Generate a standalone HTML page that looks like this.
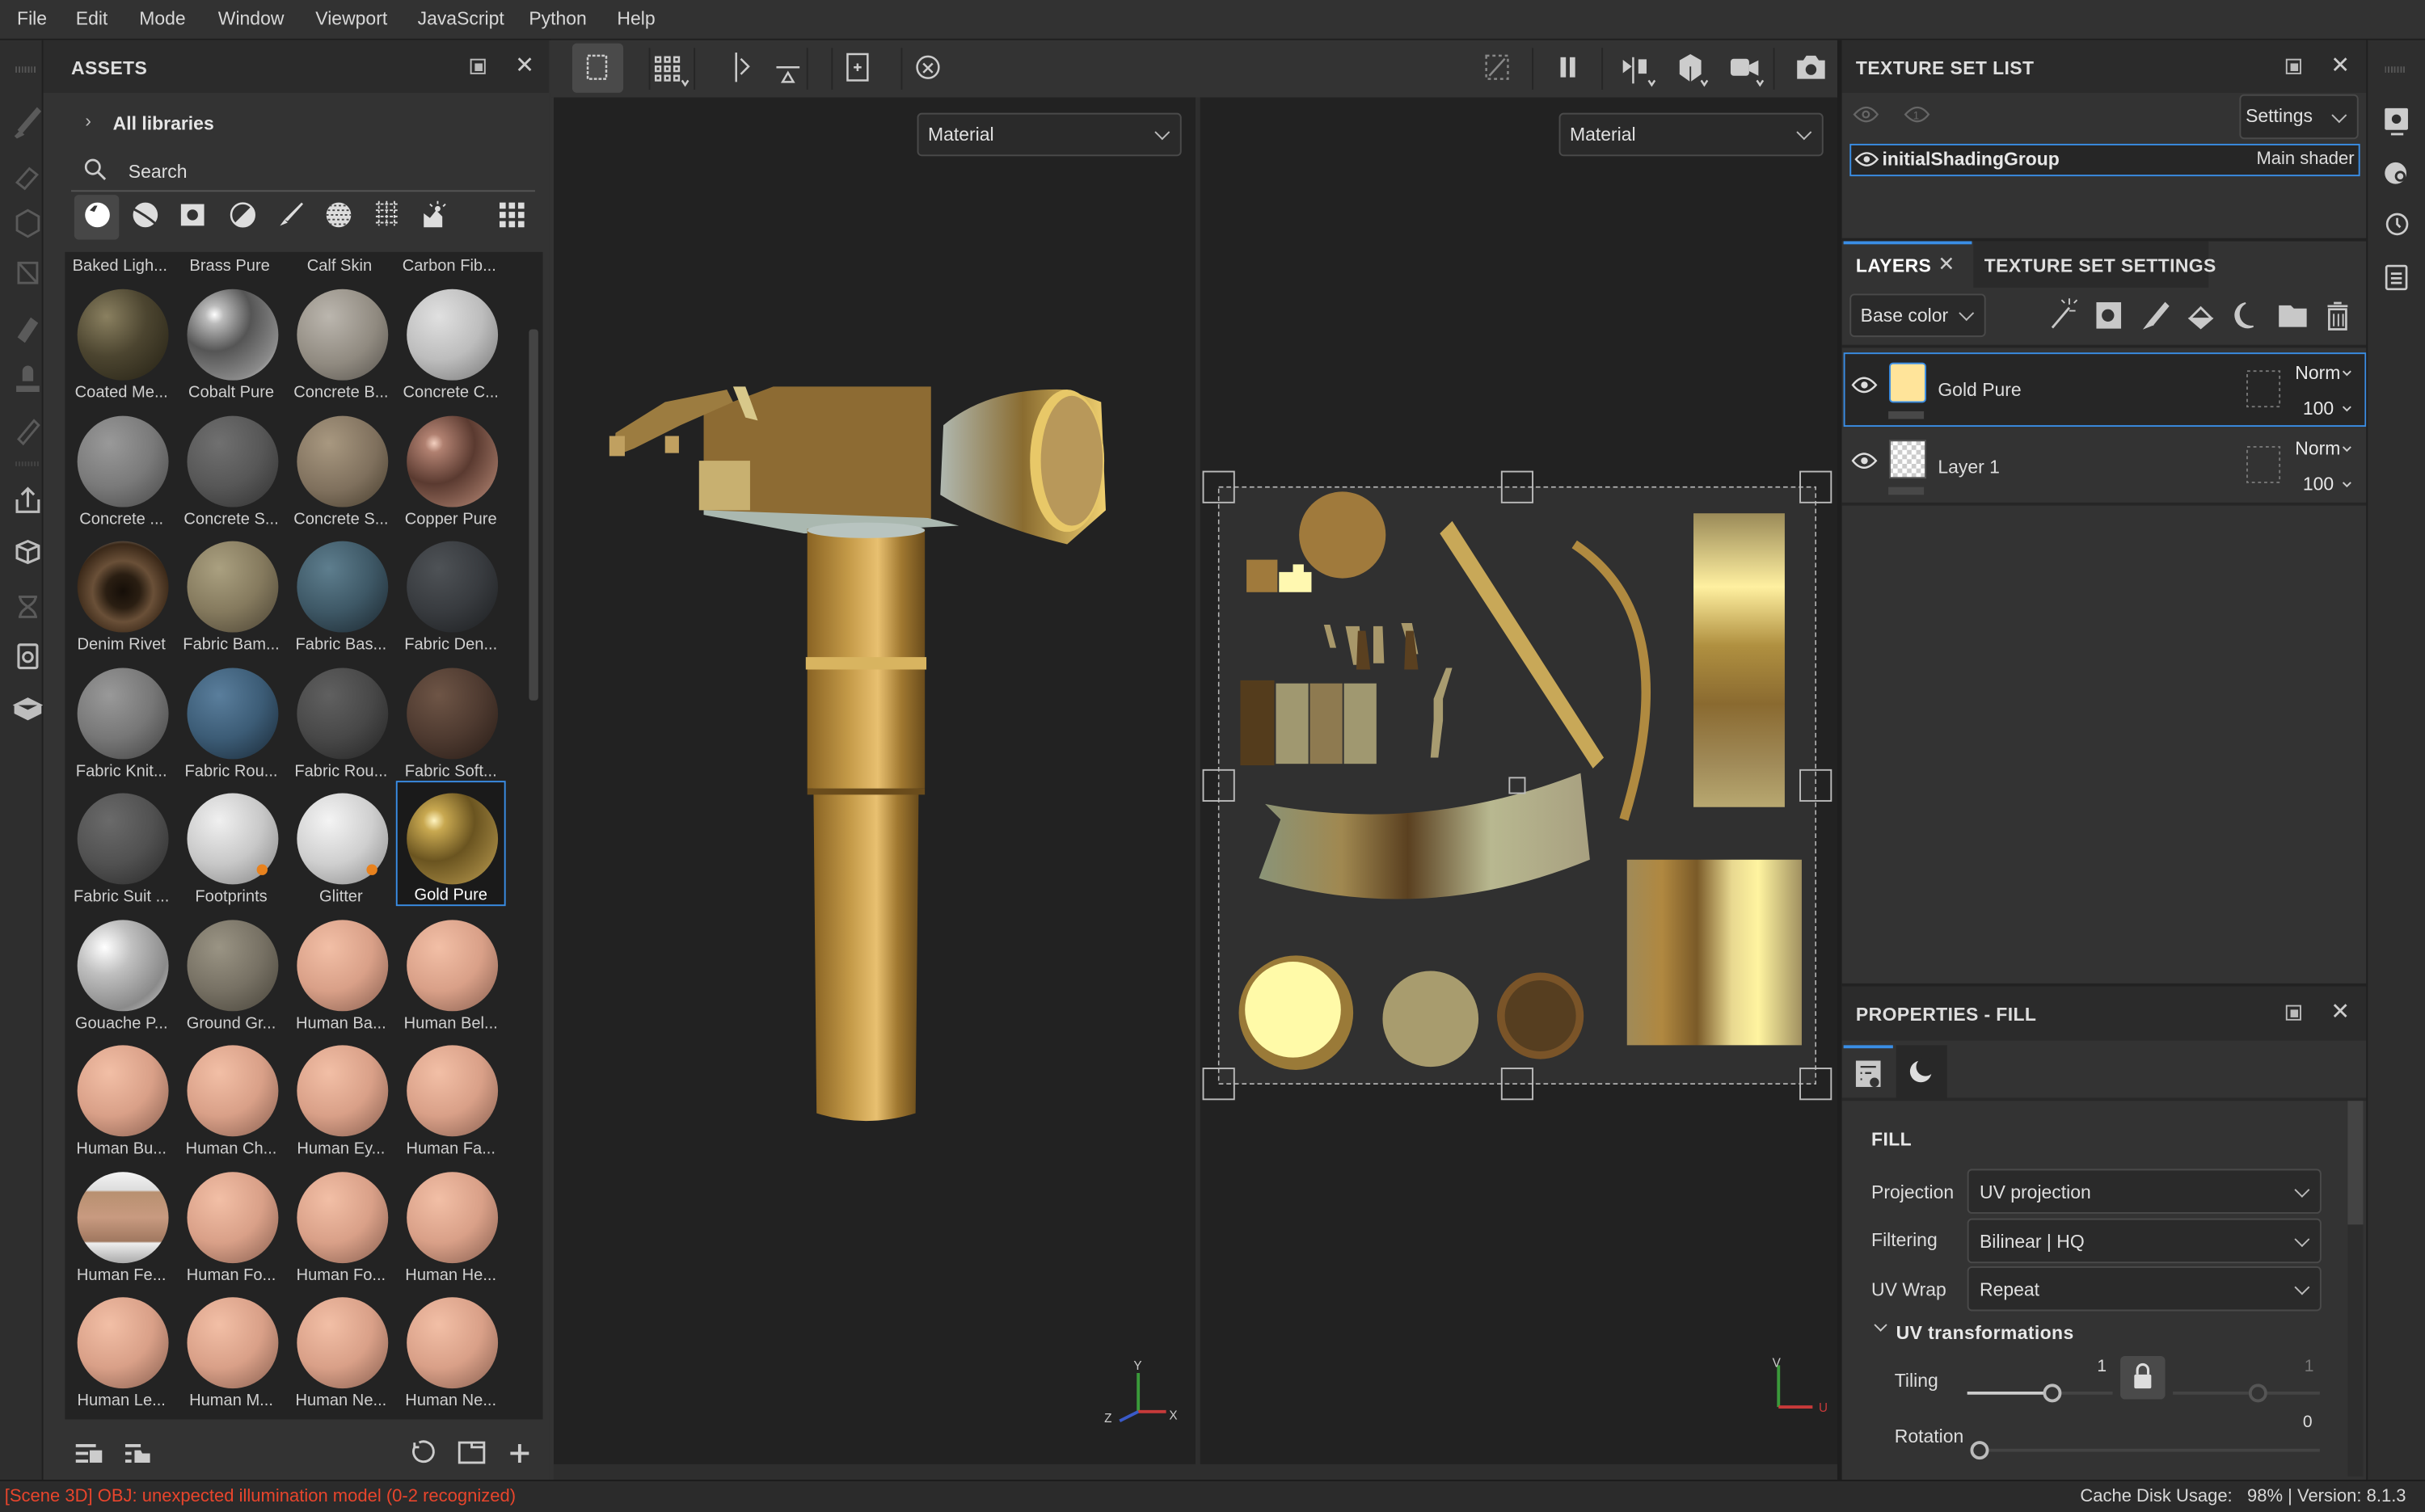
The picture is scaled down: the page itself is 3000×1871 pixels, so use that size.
<!DOCTYPE html>
<html><head><meta charset="utf-8"><style>
html,body{margin:0;padding:0;width:3000px;height:1870px;overflow:hidden;background:#222;}
#r{position:absolute;left:0;top:0;width:1568px;height:977px;transform:scale(1.91327);transform-origin:0 0;font-family:"Liberation Sans",sans-serif;color:#d4d4d4;font-size:12px;background:#333;}
.a{position:absolute;}
.hdr{font-weight:bold;font-size:12px;color:#dedede;letter-spacing:0.2px}
.it{position:absolute;width:71px;height:81px;}
.sp{position:absolute;left:7px;top:4px;width:59px;height:59px;border-radius:50%;}
.lb{position:absolute;left:0;top:65px;width:71px;text-align:center;font-size:10.5px;color:#cfcfcf;white-space:nowrap}
.dd{position:absolute;background:#2a2a2a;border:1px solid #4a4a4a;border-radius:3px;font-size:12px;color:#e0e0e0;}
.ch{position:absolute;right:8px;top:50%;width:6px;height:6px;border-right:1.5px solid #bbb;border-bottom:1.5px solid #bbb;transform:translateY(-70%) rotate(45deg);}
svg{position:absolute;overflow:visible}
</style></head><body><div id="r">

<!-- menu bar -->
<div class="a" style="left:0;top:0;width:1568px;height:25px;background:#323232;border-bottom:1px solid #1e1e1e"></div>
<div class="a" style="top:5px;left:11px;font-size:12px;color:#d8d8d8;word-spacing:0">
<span style="position:absolute;left:0">File</span><span style="position:absolute;left:38px">Edit</span><span style="position:absolute;left:79px">Mode</span><span style="position:absolute;left:130px">Window</span><span style="position:absolute;left:193px">Viewport</span><span style="position:absolute;left:259px">JavaScript</span><span style="position:absolute;left:331px">Python</span><span style="position:absolute;left:388px">Help</span></div>

<!-- left toolbar -->
<div class="a" style="left:0;top:26px;width:27px;height:931px;background:#2e2e2e;border-right:1px solid #1f1f1f"></div>
<div class="a" style="left:10px;top:43px;width:14px;height:4px;background:repeating-linear-gradient(90deg,#555 0 1px,transparent 1px 2px)"></div>
<svg style="left:0;top:0" width="28" height="480">
<g fill="#5a5a5a" stroke="#5a5a5a">
<path d="M12 84 L24 70 L26 72 L14 86Z M10 88 l3 -3 2 2 -4 2z"/>
<path d="M11 118 l8 -9 l5 4 l-8 9z" fill="none" stroke-width="1.5"/>
<path d="M18 136 l7 4 v9 l-7 4 l-7 -4 v-9z" fill="none" stroke-width="1.5"/>
<rect x="12" y="170" width="12" height="13" fill="none" stroke-width="1.5"/><path d="M12 170 L24 183" stroke-width="1.5"/>
<path d="M12 218 L20 206 L24 209 L16 221Z"/>
<path d="M11 250 h14 v3 h-14z M15 240 a3 3 0 1 1 6 0 v6 h-6z"/>
<path d="M12 284 L22 272 L25 275 L15 287Z" fill="none" stroke-width="1.5"/>
<path d="M10 300 h16" stroke="#444" stroke-dasharray="1 1" stroke-width="3"/>
</g>
<g fill="none" stroke="#bdbdbd" stroke-width="1.6">
<path d="M11 323 v8 h14 v-8 M18 328 v-12 M14 320 l4 -4 4 4"/>
<path d="M11 353 l7 -3 7 3 v8 l-7 3 -7 -3z M11 353 l7 3 7 -3 M18 356 v8"/>
<path d="M12 386 h12 M12 399 h12 M13 386 c0 6 10 7 10 13 M23 386 c0 6 -10 7 -10 13" stroke="#5a5a5a"/>
<rect x="12" y="417" width="12" height="15" rx="1"/><circle cx="18" cy="425" r="3"/>
<path d="M10 456 l8 -4 8 4 -8 4z M10 456 v5 l8 4 8 -4 v-5" fill="#bdbdbd"/>
</g>
</svg>

<!-- ASSETS panel -->
<div class="a" style="left:28px;top:26px;width:327px;height:931px;background:#333"></div>
<div class="a" style="left:28px;top:26px;width:327px;height:34px;background:#2b2b2b"></div>
<div class="a hdr" style="left:46px;top:37px">ASSETS</div>
<div class="a" style="left:304px;top:38px;width:8px;height:8px;border:1px solid #bbb"></div>
<div class="a" style="left:307px;top:41px;width:5px;height:5px;background:#bbb"></div>
<div class="a" style="left:333px;top:33px;font-size:15px;color:#ccc">✕</div>
<div class="a" style="left:55px;top:71px;font-size:12px;color:#bbb">›</div>
<div class="a" style="left:73px;top:73px;font-weight:bold;color:#e6e6e6;font-size:12px">All libraries</div>
<svg style="left:54px;top:102px" width="16" height="16"><circle cx="6" cy="6" r="4.5" fill="none" stroke="#ccc" stroke-width="1.4"/><path d="M9.5 9.5 L14 14" stroke="#ccc" stroke-width="1.5"/></svg>
<div class="a" style="left:83px;top:104px;color:#ddd;font-size:12px">Search</div>
<div class="a" style="left:46px;top:123px;width:300px;height:1px;background:#555"></div>
<div class="a" style="left:48px;top:126px;width:29px;height:29px;background:#474747;border-radius:3px"></div>
<svg style="left:0;top:0" width="360" height="160">
<circle cx="63" cy="139" r="8" fill="#fff"/><path d="M58 136 l3 -3 h2 l-2 4z" fill="#333"/>
<circle cx="94" cy="139" r="8" fill="#ddd"/><path d="M86 135 q8 4 15 10" stroke="#333" stroke-width="1.5" fill="none"/>
<rect x="117" y="132" width="15" height="14" fill="#ddd"/><circle cx="124.5" cy="139" r="3.5" fill="#333"/>
<circle cx="157" cy="139" r="7.5" fill="none" stroke="#ddd" stroke-width="1.3"/><path d="M151.7 144.3 A7.5 7.5 0 0 0 162.3 133.7Z" fill="#ddd"/>
<path d="M181 146 l3 -4 2 2z M184 142 l11 -11 1 1 -10 11z" fill="#ddd"/>
<circle cx="219" cy="139" r="8" fill="#ddd"/><path d="M213 133h12M212 136h14M211 139h16M212 142h14M213 145h12" stroke="#444" stroke-width="1" stroke-dasharray="1.5 1.5"/>
<g fill="none" stroke="#ddd" stroke-width="1"><path d="M243 132h14M243 136h14M243 140h14M243 144h14M245 130v16M250 130v16M255 130v16" stroke-dasharray="2 1"/></g>
<path d="M274 147 v-9 l4 3 4 -5 4 4 v7z" fill="#ddd"/><circle cx="283" cy="135" r="1.8" fill="#ddd"/><path d="M283 130v2M288 132l-1.5 1.5M278 132l1.5 1.5" stroke="#ddd"/>
<g fill="#ddd"><rect x="323" y="131" width="4" height="4"/><rect x="329" y="131" width="4" height="4"/><rect x="335" y="131" width="4" height="4"/><rect x="323" y="137" width="4" height="4"/><rect x="329" y="137" width="4" height="4"/><rect x="335" y="137" width="4" height="4"/><rect x="323" y="143" width="4" height="4"/><rect x="329" y="143" width="4" height="4"/><rect x="335" y="143" width="4" height="4"/></g>
</svg>

<!-- grid -->
<div class="a" style="left:42px;top:163px;width:309px;height:755px;background:#232323;overflow:hidden">
 <div class="lb" style="left:0;top:3px">Baked Ligh...</div><div class="lb" style="left:71px;top:3px">Brass Pure</div><div class="lb" style="left:142px;top:3px">Calf Skin</div><div class="lb" style="left:213px;top:3px">Carbon Fib...</div>

 <div class="it" style="left:1px;top:20px"><div class="sp" style="background:radial-gradient(circle at 32% 30%,#8a8060,#4c4530 45%,#2a2618 90%)"></div><div class="lb">Coated Me...</div></div>
 <div class="it" style="left:72px;top:20px"><div class="sp" style="background:radial-gradient(circle at 30% 28%,#fff 0,#bbb 10%,#555 40%,#8a8a8a 75%,#ddd 95%)"></div><div class="lb">Cobalt Pure</div></div>
 <div class="it" style="left:143px;top:20px"><div class="sp" style="background:radial-gradient(circle at 35% 30%,#bbb6ae,#908a80 55%,#5a5650 95%)"></div><div class="lb">Concrete B...</div></div>
 <div class="it" style="left:214px;top:20px"><div class="sp" style="background:radial-gradient(circle at 35% 30%,#e0e0e0,#bdbdbd 50%,#7a7a7a 95%)"></div><div class="lb">Concrete C...</div></div>

 <div class="it" style="left:1px;top:101.5px"><div class="sp" style="background:radial-gradient(circle at 35% 30%,#999,#7a7a7a 50%,#4a4a4a 95%)"></div><div class="lb">Concrete ...</div></div>
 <div class="it" style="left:72px;top:101.5px"><div class="sp" style="background:radial-gradient(circle at 35% 30%,#707070,#575757 50%,#333 95%)"></div><div class="lb">Concrete S...</div></div>
 <div class="it" style="left:143px;top:101.5px"><div class="sp" style="background:radial-gradient(circle at 35% 30%,#a89880,#7f705d 55%,#4a4030 95%)"></div><div class="lb">Concrete S...</div></div>
 <div class="it" style="left:214px;top:101.5px"><div class="sp" style="background:radial-gradient(circle at 30% 30%,#f3d0c0 0,#b08070 10%,#5a3a30 45%,#9a7060 80%,#d8b0a0 95%)"></div><div class="lb">Copper Pure</div></div>

 <div class="it" style="left:1px;top:183px"><div class="sp" style="background:radial-gradient(circle at 50% 55%,#150e08 0,#2a1e12 25%,#6a5038 45%,#3a2818 70%,#ddd 92%)"></div><div class="lb">Denim Rivet</div></div>
 <div class="it" style="left:72px;top:183px"><div class="sp" style="background:radial-gradient(circle at 35% 30%,#aaa080,#857a5e 50%,#4e4636 95%)"></div><div class="lb">Fabric Bam...</div></div>
 <div class="it" style="left:143px;top:183px"><div class="sp" style="background:radial-gradient(circle at 35% 30%,#5e7e8e,#3e5866 50%,#1e2a32 95%)"></div><div class="lb">Fabric Bas...</div></div>
 <div class="it" style="left:214px;top:183px"><div class="sp" style="background:radial-gradient(circle at 35% 30%,#4e5256,#383b3f 50%,#1e2022 95%)"></div><div class="lb">Fabric Den...</div></div>

 <div class="it" style="left:1px;top:264.5px"><div class="sp" style="background:radial-gradient(circle at 35% 30%,#999,#777 50%,#444 95%)"></div><div class="lb">Fabric Knit...</div></div>
 <div class="it" style="left:72px;top:264.5px"><div class="sp" style="background:radial-gradient(circle at 35% 30%,#5a7e9c,#3c5c76 50%,#1c2c3a 95%)"></div><div class="lb">Fabric Rou...</div></div>
 <div class="it" style="left:143px;top:264.5px"><div class="sp" style="background:radial-gradient(circle at 35% 30%,#606060,#484848 50%,#262626 95%)"></div><div class="lb">Fabric Rou...</div></div>
 <div class="it" style="left:214px;top:264.5px"><div class="sp" style="background:radial-gradient(circle at 35% 30%,#6e5546,#4e3a30 50%,#2a1e18 95%)"></div><div class="lb">Fabric Soft...</div></div>

 <div class="it" style="left:1px;top:346px"><div class="sp" style="background:radial-gradient(circle at 35% 30%,#6a6a6a,#515151 50%,#2c2c2c 95%)"></div><div class="lb">Fabric Suit ...</div></div>
 <div class="it" style="left:72px;top:346px"><div class="sp" style="background:radial-gradient(circle at 35% 30%,#f0f0f0,#c8c8c8 50%,#888 95%)"></div><div class="lb">Footprints</div><div class="a" style="left:52px;top:50px;width:7px;height:7px;border-radius:50%;background:#e8821e"></div></div>
 <div class="it" style="left:143px;top:346px"><div class="sp" style="background:radial-gradient(circle at 35% 30%,#f4f4f4,#cfcfcf 50%,#8e8e8e 95%)"></div><div class="lb">Glitter</div><div class="a" style="left:52px;top:50px;width:7px;height:7px;border-radius:50%;background:#e8821e"></div></div>
 <div class="it" style="left:214px;top:342px;background:#1a1a1a;border:1px solid #3a8ee6;width:69px;height:79px"><div class="sp" style="left:6px;top:7px;background:radial-gradient(circle at 30% 30%,#fff4c0 0,#c8a850 12%,#6a5420 45%,#a08440 80%,#e0c880 95%)"></div><div class="lb" style="top:67px;color:#fff;width:69px">Gold Pure</div></div>

 <div class="it" style="left:1px;top:427.5px"><div class="sp" style="background:radial-gradient(circle at 30% 30%,#fff,#c0c0c0 30%,#8a8a8a 70%,#ccc 95%)"></div><div class="lb">Gouache P...</div></div>
 <div class="it" style="left:72px;top:427.5px"><div class="sp" style="background:radial-gradient(circle at 35% 30%,#9a9484,#777164 50%,#4a463c 95%)"></div><div class="lb">Ground Gr...</div></div>
 <div class="it" style="left:143px;top:427.5px"><div class="sp" style="background:radial-gradient(circle at 35% 30%,#f2bfa6,#d9a088 50%,#8c6252 95%)"></div><div class="lb">Human Ba...</div></div>
 <div class="it" style="left:214px;top:427.5px"><div class="sp" style="background:radial-gradient(circle at 35% 30%,#f2bfa6,#d9a088 50%,#8c6252 95%)"></div><div class="lb">Human Bel...</div></div>

 <div class="it" style="left:1px;top:509px"><div class="sp" style="background:radial-gradient(circle at 35% 30%,#f2bfa6,#d9a088 50%,#8c6252 95%)"></div><div class="lb">Human Bu...</div></div>
 <div class="it" style="left:72px;top:509px"><div class="sp" style="background:radial-gradient(circle at 35% 30%,#f2bfa6,#d9a088 50%,#8c6252 95%)"></div><div class="lb">Human Ch...</div></div>
 <div class="it" style="left:143px;top:509px"><div class="sp" style="background:radial-gradient(circle at 35% 30%,#f2bfa6,#d9a088 50%,#8c6252 95%)"></div><div class="lb">Human Ey...</div></div>
 <div class="it" style="left:214px;top:509px"><div class="sp" style="background:radial-gradient(circle at 35% 30%,#f2bfa6,#d9a088 50%,#8c6252 95%)"></div><div class="lb">Human Fa...</div></div>

 <div class="it" style="left:1px;top:590.5px"><div class="sp" style="background:linear-gradient(#f4f4f4 0,#ddd 20%,#b89070 22%,#c89a80 50%,#a07860 76%,#eee 78%,#aaa 100%)"></div><div class="lb">Human Fe...</div></div>
 <div class="it" style="left:72px;top:590.5px"><div class="sp" style="background:radial-gradient(circle at 35% 30%,#f2bfa6,#d9a088 50%,#8c6252 95%)"></div><div class="lb">Human Fo...</div></div>
 <div class="it" style="left:143px;top:590.5px"><div class="sp" style="background:radial-gradient(circle at 35% 30%,#f2bfa6,#d9a088 50%,#8c6252 95%)"></div><div class="lb">Human Fo...</div></div>
 <div class="it" style="left:214px;top:590.5px"><div class="sp" style="background:radial-gradient(circle at 35% 30%,#f2bfa6,#d9a088 50%,#8c6252 95%)"></div><div class="lb">Human He...</div></div>

 <div class="it" style="left:1px;top:672px"><div class="sp" style="background:radial-gradient(circle at 35% 30%,#f2bfa6,#d9a088 50%,#8c6252 95%)"></div><div class="lb">Human Le...</div></div>
 <div class="it" style="left:72px;top:672px"><div class="sp" style="background:radial-gradient(circle at 35% 30%,#f2bfa6,#d9a088 50%,#8c6252 95%)"></div><div class="lb">Human M...</div></div>
 <div class="it" style="left:143px;top:672px"><div class="sp" style="background:radial-gradient(circle at 35% 30%,#f2bfa6,#d9a088 50%,#8c6252 95%)"></div><div class="lb">Human Ne...</div></div>
 <div class="it" style="left:214px;top:672px"><div class="sp" style="background:radial-gradient(circle at 35% 30%,#f2bfa6,#d9a088 50%,#8c6252 95%)"></div><div class="lb">Human Ne...</div></div>

 <div class="it" style="left:1px;top:753px"><div class="sp" style="background:#d9a088"></div></div>
 <div class="it" style="left:72px;top:753px"><div class="sp" style="background:#d9a088"></div></div>
 <div class="it" style="left:143px;top:753px"><div class="sp" style="background:#d9a088"></div></div>
 <div class="it" style="left:214px;top:753px"><div class="sp" style="background:#d9a088"></div></div>
</div>
<div class="a" style="left:342px;top:213px;width:6px;height:240px;background:#444;border-radius:2px"></div>
<svg style="left:0;top:0" width="360" height="960">
<g fill="#ccc">
<rect x="49" y="934" width="13" height="2"/><rect x="49" y="939" width="8" height="2"/><rect x="49" y="944" width="8" height="2"/><rect x="58" y="938" width="8" height="8"/>
<rect x="81" y="934" width="10" height="2"/><rect x="81" y="939" width="4" height="2"/><rect x="81" y="944" width="4" height="2"/><path d="M87 938h4l1 2h5v6h-10z"/>
</g>
<g fill="none" stroke="#ccc" stroke-width="1.5">
<path d="M268 936 a6.5 6.5 0 1 0 3 -3 M268 933 v3 h3"/>
<rect x="297" y="933" width="16" height="13"/><path d="M305 933 v3 h8"/>
<path d="M336 934 v12 M330 940 h12" stroke-width="2"/>
</g>
</svg>

<!-- viewport toolbar -->
<div class="a" style="left:356px;top:26px;width:834px;height:37px;background:#333"></div>
<div class="a" style="left:370px;top:28px;width:33px;height:32px;background:#4a4a4a;border-radius:3px"></div>
<svg style="left:0;top:0" width="1190" height="70">
<g stroke="#262626" stroke-width="1"><path d="M420 31v27M449 31v27M522 31v27M538 31v27M583 31v27M991 31v27M1036 31v27M1147 31v27"/></g>
<g fill="none" stroke="#ccc" stroke-width="1.3">
<rect x="380" y="36" width="12" height="15" stroke-dasharray="2 1"/>
<path d="M424 37h3v3h-3zM430 37h3v3h-3zM436 37h3v3h-3zM424 43h3v3h-3zM430 43h3v3h-3zM436 43h3v3h-3zM424 49h3v3h-3zM430 49h3v3h-3zM436 49h3v3h-3z"/>
<path d="M441 52l2 3 2 -3"/>
<path d="M476 34v19"/><path d="M479 38l5 5-5 5"/>
<path d="M502 43.5h15"/><path d="M506 53l3.5-6 3.5 6z"/>
<rect x="548" y="35" width="13" height="17"/><path d="M554.5 41v5M552 43.5h5"/>
<circle cx="600" cy="43.5" r="7"/><path d="M597 41l6 6M603 41l-6 6"/>
<rect x="961" y="36" width="14" height="15" stroke="#888" stroke-dasharray="2 2"/><path d="M963 49l10-11" stroke="#888"/>
<path d="M1056 37v17M1066 52l2 3 2-3M1100 52l2 3 2-3M1136 52l2 3 2-3"/>
<path d="M1050 40l4 3-4 3z M1060 39h4v8h-4z" fill="#ccc"/>
</g>
<g fill="#ccc">
<rect x="1009" y="37" width="3.5" height="13"/><rect x="1015" y="37" width="3.5" height="13"/>
<path d="M1093 35l7 4v9l-7 5-7-5v-9z"/><path d="M1093 43v10" stroke="#333"/>
<rect x="1119" y="38" width="12" height="11" rx="2"/><path d="M1131 42l6-3v10l-6-3z"/>
<path d="M1162 39h4l2-3h6l2 3h4v12h-18z"/>
</g>
<circle cx="1171" cy="45" r="3.5" fill="#333"/>
</svg>

<!-- viewport -->
<div class="a" style="left:358px;top:63px;width:415px;height:884px;background:#222"></div>
<div class="a" style="left:773px;top:63px;width:3px;height:884px;background:#2e2e2e"></div>
<div class="a" style="left:776px;top:63px;width:412px;height:884px;background:#222"></div>
<div class="a" style="left:358px;top:947px;width:832px;height:10px;background:#2e2e2e"></div>
<div class="a" style="left:1188px;top:26px;width:3px;height:931px;background:#1e1e1e"></div>
<div class="dd" style="left:593px;top:73px;width:169px;height:26px;"><span style="position:absolute;left:6px;top:6px">Material</span><div class="ch"></div></div>
<div class="dd" style="left:1008px;top:73px;width:169px;height:26px;"><span style="position:absolute;left:6px;top:6px">Material</span><div class="ch"></div></div>

<svg style="left:0;top:0" width="1190" height="960">
<defs>
<linearGradient id="hn" x1="0" x2="1"><stop offset="0" stop-color="#8a6424"/><stop offset="0.35" stop-color="#c49a48"/><stop offset="0.6" stop-color="#e8c070"/><stop offset="0.8" stop-color="#a07830"/><stop offset="1" stop-color="#6a4c1c"/></linearGradient>
<linearGradient id="vb" x1="0" y1="0" x2="0" y2="1"><stop offset="0" stop-color="#9a8a58"/><stop offset="0.25" stop-color="#fff0a0"/><stop offset="0.45" stop-color="#b09040"/><stop offset="0.65" stop-color="#8a6a30"/><stop offset="0.85" stop-color="#a08a58"/><stop offset="1" stop-color="#b8a870"/></linearGradient>
<linearGradient id="vr" x1="0" x2="1"><stop offset="0" stop-color="#a08a58"/><stop offset="0.2" stop-color="#b08840"/><stop offset="0.4" stop-color="#7a5a28"/><stop offset="0.6" stop-color="#e8d890"/><stop offset="0.75" stop-color="#fff4a0"/><stop offset="1" stop-color="#a09060"/></linearGradient>
<linearGradient id="cb" x1="0" x2="1"><stop offset="0" stop-color="#8a9478"/><stop offset="0.25" stop-color="#a08850"/><stop offset="0.45" stop-color="#5a4020"/><stop offset="0.7" stop-color="#b8b890"/><stop offset="1" stop-color="#a8a080"/></linearGradient>
<linearGradient id="pl" x1="0" x2="1"><stop offset="0" stop-color="#b0b8b0"/><stop offset="0.5" stop-color="#8a6c30"/><stop offset="1" stop-color="#f0d070"/></linearGradient>
</defs>
<!-- hammer -->
<path d="M455 267 L500 250 L602 250 L602 340 L455 330Z" fill="#8d6b33"/>
<path d="M452 298 h33 v32 h-33z" fill="#c8b070"/>
<path d="M474 250 l8 0 l8 22 l-8 -2z" fill="#d8c88a"/>
<path d="M398 280 L430 260 L470 252 L474 260 L440 275 L410 290 L397 295Z" fill="#9c7c40"/>
<path d="M394 282h10v13h-10zM430 282h9v11h-9z" fill="#c0a060"/>
<path d="M455 330 L600 335 L620 340 L520 345 L455 333Z" fill="#aab8b0"/>
<path d="M610 275 Q640 250 690 252 L712 260 L715 330 L690 352 Q640 340 608 320 Z" fill="url(#pl)"/>
<ellipse cx="690" cy="298" rx="24" ry="46" fill="#e8c868"/>
<ellipse cx="693" cy="298" rx="20" ry="42" fill="#b8985a"/>
<path d="M522 342 h76 v168 h-76z" fill="url(#hn)"/>
<ellipse cx="560" cy="343" rx="38" ry="5" fill="#b8c4c0"/>
<path d="M521 425 h78 v8 h-78z" fill="#d8b460"/>
<path d="M526 510 h68 l-2 210 q-32 10 -64 0z" fill="url(#hn)"/>
<path d="M522 510 h76 v4 h-76z" fill="#6a4c1c"/>
<!-- axis gizmo -->
<g stroke-width="2" fill="none"><path d="M736 913v-25" stroke="#3a9a3a"/><path d="M736 913h18" stroke="#c83a3a"/><path d="M736 913l-12 6" stroke="#3a5ac8"/></g>
<text x="733" y="886" font-size="8" fill="#ccc">Y</text><text x="756" y="918" font-size="8" fill="#ccc">X</text><text x="714" y="920" font-size="8" fill="#ccc">Z</text>
<g stroke-width="2" fill="none"><path d="M1150 910v-27" stroke="#3a9a3a"/><path d="M1150 910h22" stroke="#c83a3a"/></g>
<text x="1146" y="884" font-size="8" fill="#ccc">V</text><text x="1176" y="913" font-size="8" fill="#c83a3a">U</text>
<!-- UV area -->
<rect x="788" y="315" width="386" height="386" fill="#303030" stroke="#bbb" stroke-width="0.8" stroke-dasharray="3 2"/>
<circle cx="868" cy="346" r="28" fill="#a07a3c"/>
<rect x="806" y="362" width="20" height="21" fill="#a07a3c"/><path d="M827 370h9v-5h7v5h5v13h-21z" fill="#fff8b0"/>
<path d="M856 404l4 15h4l-4-15zM870 405l5 25h6l-2-25zM888 405h6l1 24h-7zM906 403l6 20h5l-4-20z" fill="#a8986a"/>
<path d="M878 408h5l3 25h-9z M909 408h5l3 25h-9z" fill="#5a4020"/>
<rect x="802" y="440" width="22" height="55" fill="#543c1c"/><rect x="825" y="442" width="21" height="52" fill="#a09870"/><rect x="847" y="442" width="21" height="52" fill="#8e7a50"/><rect x="869" y="442" width="21" height="52" fill="#a09870"/>
<path d="M935 432l4 0 -6 20v14l-3 24h-5l2-24v-14z" fill="#a89c70"/>
<path d="M931 345 L939 337 L1037 490 L1030 497Z" fill="#c8a858"/>
<path d="M1018 352 Q1090 400 1050 530" stroke="#b08a40" stroke-width="6" fill="none"/>
<rect x="1095" y="332" width="59" height="190" fill="url(#vb)"/>
<path d="M818 520 Q920 540 1022 500 L1028 556 Q920 600 814 568 L828 530Z" fill="url(#cb)"/>
<rect x="1052" y="556" width="113" height="120" fill="url(#vr)"/>
<circle cx="838" cy="655" r="37" fill="#9a7a38"/><circle cx="836" cy="653" r="31" fill="#fffaa8"/>
<circle cx="925" cy="659" r="31" fill="#a89c6e"/>
<circle cx="996" cy="657" r="28" fill="#7a5428"/><circle cx="996" cy="657" r="23" fill="#563e20"/>
<g fill="none" stroke="#bbb" stroke-width="1">
<rect x="778" y="305" width="20" height="20"/><rect x="971" y="305" width="20" height="20"/><rect x="1164" y="305" width="20" height="20"/>
<rect x="778" y="498" width="20" height="20"/><rect x="1164" y="498" width="20" height="20"/>
<rect x="778" y="691" width="20" height="20"/><rect x="971" y="691" width="20" height="20"/><rect x="1164" y="691" width="20" height="20"/>
<rect x="976" y="503" width="10" height="10"/>
</g>
</svg>

<!-- right panel -->
<div class="a" style="left:1191px;top:26px;width:339px;height:931px;background:#333"></div>
<div class="a" style="left:1191px;top:26px;width:339px;height:34px;background:#2b2b2b"></div>
<div class="a hdr" style="left:1200px;top:37px">TEXTURE SET LIST</div>
<div class="a" style="left:1478px;top:38px;width:8px;height:8px;border:1px solid #bbb"></div><div class="a" style="left:1481px;top:41px;width:5px;height:5px;background:#bbb"></div>
<div class="a" style="left:1507px;top:33px;font-size:15px;color:#ccc">✕</div>
<svg style="left:0;top:0" width="1530" height="120"><g fill="none" stroke="#666" stroke-width="1.2"><path d="M1199 74q8 -9 15 0q-7 9 -15 0z"/><circle cx="1206.5" cy="74" r="2"/><path d="M1232 74q8 -9 15 0q-7 9 -15 0z"/></g><text x="1237" y="77" font-size="7" fill="#666">1</text></svg>
<div class="dd" style="left:1448px;top:61px;width:75px;height:27px;"><span style="position:absolute;left:3px;top:6px">Settings</span><div class="ch"></div></div>
<div class="a" style="left:1196px;top:93px;width:328px;height:19px;border:1px solid #3a8ee6;background:#262626"></div>
<svg style="left:0;top:0" width="1530" height="120"><path d="M1200 103q7 -8 14 0q-7 8 -14 0z" fill="none" stroke="#ddd" stroke-width="1.2"/><circle cx="1207" cy="103" r="2" fill="#ddd"/></svg>
<div class="a" style="left:1217px;top:96px;font-weight:bold;color:#e8e8e8;font-size:12px">initialShadingGroup</div>
<div class="a" style="left:1459px;top:97px;color:#ddd;font-size:11.5px">Main shader</div>
<div class="a" style="left:1191px;top:154px;width:339px;height:2px;background:#222"></div>
<div class="a" style="left:1192px;top:156px;width:83px;height:2px;background:#3a8ee6"></div>
<div class="a" style="left:1276px;top:156px;width:152px;height:30px;background:#2a2a2a"></div>
<div class="a hdr" style="left:1200px;top:165px;color:#fff">LAYERS</div>
<div class="a" style="left:1253px;top:163px;font-size:13px;color:#ccc">✕</div>
<div class="a hdr" style="left:1283px;top:165px">TEXTURE SET SETTINGS</div>
<div class="dd" style="left:1196px;top:190px;width:86px;height:26px;"><span style="position:absolute;left:6px;top:6px">Base color</span><div class="ch"></div></div>
<svg style="left:0;top:0" width="1530" height="230">
<g fill="#c8c8c8" stroke="#c8c8c8">
<path d="M1327 212l11-13" stroke-width="1.5"/><path d="M1338 197v-4M1338 201h4M1335 196l-2-2M1341 196l2-2" stroke-width="1"/>
<path d="M1356 196h15v16h-15z"/><circle cx="1363" cy="204" r="4" fill="#333" stroke="none"/>
<path d="M1387 212l3-4 2 2zM1390 208l10-12 2 2-10 12z"/>
<path d="M1416 206l7-7 7 7-7 6z" fill="none" stroke-width="1.5"/><path d="M1416 206h14l-7 6z"/>
<path d="M1452 196a8 8 0 1 0 5 15 8 8 0 0 1 -5 -15z"/>
<path d="M1474 198h7l2 2h8v11h-17z"/>
<path d="M1505 198h13M1509 196h5M1506 200h11v13h-11z" fill="none" stroke-width="1.4"/><path d="M1509 203v8M1512 203v8M1515 203v8" stroke-width="1"/>
</g>
</svg>
<div class="a" style="left:1191px;top:223px;width:339px;height:2px;background:#242424"></div>
<div class="a" style="left:1192px;top:228px;width:336px;height:46px;background:#262626;border:1px solid #3a8ee6"></div>
<div class="a" style="left:1191px;top:277px;width:339px;height:48px;background:#333;border-bottom:2px solid #262626"></div>
<svg style="left:0;top:0" width="1530" height="330">
<g fill="none" stroke="#ddd" stroke-width="1.3"><path d="M1198 249q7 -9 15 0q-8 9 -15 0z"/><path d="M1198 298q7 -9 15 0q-8 9 -15 0z"/></g>
<circle cx="1205.5" cy="249" r="2.2" fill="#ddd"/><circle cx="1205.5" cy="298" r="2.2" fill="#ddd"/>
<rect x="1222" y="235" width="23" height="25" rx="2" fill="#ffe49a" stroke="#3a8ee6" stroke-width="1"/>
<defs><pattern id="ck" width="6" height="6" patternUnits="userSpaceOnUse"><rect width="6" height="6" fill="#fff"/><rect width="3" height="3" fill="#ccc"/><rect x="3" y="3" width="3" height="3" fill="#ccc"/></pattern></defs>
<rect x="1222" y="285" width="23" height="24" fill="url(#ck)" stroke="#555"/>
<rect x="1221" y="266" width="23" height="5" fill="#484848"/><rect x="1221" y="315" width="23" height="5" fill="#484848"/>
<rect x="1453" y="240" width="21" height="23" fill="none" stroke="#777" stroke-dasharray="2 2"/>
<rect x="1453" y="289" width="21" height="23" fill="none" stroke="#777" stroke-dasharray="2 2"/>
<path d="M1515 240l2.5 2.5 2.5-2.5M1515 263l2.5 2.5 2.5-2.5M1515 289l2.5 2.5 2.5-2.5M1515 312l2.5 2.5 2.5-2.5" stroke="#ccc" fill="none"/>
</svg>
<div class="a" style="left:1253px;top:245px;color:#ddd;font-size:12px">Gold Pure</div>
<div class="a" style="left:1253px;top:295px;color:#ddd;font-size:12px">Layer 1</div>
<div class="a" style="left:1484px;top:234px;color:#e8e8e8;font-size:12px">Norm</div>
<div class="a" style="left:1489px;top:257px;color:#e8e8e8;font-size:12px">100</div>
<div class="a" style="left:1484px;top:283px;color:#e8e8e8;font-size:12px">Norm</div>
<div class="a" style="left:1489px;top:306px;color:#e8e8e8;font-size:12px">100</div>

<!-- properties -->
<div class="a" style="left:1191px;top:636px;width:339px;height:2px;background:#222"></div>
<div class="a" style="left:1191px;top:638px;width:339px;height:35px;background:#2b2b2b"></div>
<div class="a hdr" style="left:1200px;top:649px">PROPERTIES - FILL</div>
<div class="a" style="left:1478px;top:650px;width:8px;height:8px;border:1px solid #bbb"></div><div class="a" style="left:1481px;top:653px;width:5px;height:5px;background:#bbb"></div>
<div class="a" style="left:1507px;top:645px;font-size:15px;color:#ccc">✕</div>
<div class="a" style="left:1192px;top:676px;width:32px;height:2px;background:#3a8ee6"></div>
<div class="a" style="left:1226px;top:676px;width:33px;height:34px;background:#282828"></div>
<div class="a" style="left:1191px;top:710px;width:339px;height:2px;background:#282828"></div>
<svg style="left:0;top:0" width="1530" height="720">
<rect x="1200" y="686" width="16" height="17" fill="#c8c8c8"/><path d="M1203 690h10M1203 694h1M1206 694h4M1203 698h1" stroke="#333" stroke-width="1.2"/><circle cx="1212" cy="700" r="3" fill="#333"/>
<circle cx="1242" cy="693" r="7" fill="#ddd"/><circle cx="1245" cy="690" r="6" fill="#282828"/>
</svg>
<div class="a" style="left:1518px;top:712px;width:10px;height:243px;background:#2d2d2d"></div>
<div class="a" style="left:1518px;top:712px;width:10px;height:80px;background:#444"></div>
<div class="a hdr" style="left:1210px;top:730px;color:#e8e8e8">FILL</div>
<div class="a" style="left:1210px;top:764px;color:#ddd">Projection</div>
<div class="a" style="left:1210px;top:795px;color:#ddd">Filtering</div>
<div class="a" style="left:1210px;top:827px;color:#ddd">UV Wrap</div>
<div class="dd" style="left:1272px;top:756px;width:227px;height:27px;"><span style="position:absolute;left:7px;top:7px">UV projection</span><div class="ch"></div></div>
<div class="dd" style="left:1272px;top:788px;width:227px;height:27px;"><span style="position:absolute;left:7px;top:7px">Bilinear | HQ</span><div class="ch"></div></div>
<div class="dd" style="left:1272px;top:819px;width:227px;height:27px;"><span style="position:absolute;left:7px;top:7px">Repeat</span><div class="ch"></div></div>
<div class="a" style="left:1213px;top:854px;width:5px;height:5px;border-right:1.3px solid #ccc;border-bottom:1.3px solid #ccc;transform:rotate(45deg)"></div>
<div class="a hdr" style="left:1226px;top:855px;color:#e8e8e8">UV transformations</div>
<div class="a" style="left:1225px;top:886px;color:#ddd">Tiling</div>
<div class="a" style="left:1225px;top:922px;color:#ddd">Rotation</div>
<div class="a" style="left:1356px;top:878px;color:#ddd;font-size:11px">1</div>
<div class="a" style="left:1490px;top:878px;color:#777;font-size:11px">1</div>
<div class="a" style="left:1489px;top:914px;color:#ddd;font-size:11px">0</div>
<svg style="left:0;top:0" width="1530" height="960">
<path d="M1272 901h50" stroke="#ccc" stroke-width="2"/><path d="M1333 901h33M1405 901h49M1466 901h34M1286 938h214" stroke="#444" stroke-width="2"/>
<circle cx="1327" cy="901" r="5" fill="#333" stroke="#bbb" stroke-width="2"/>
<circle cx="1460" cy="901" r="5" fill="#333" stroke="#555" stroke-width="2"/>
<circle cx="1280" cy="938" r="5" fill="#333" stroke="#bbb" stroke-width="2"/>
<rect x="1371" y="877" width="29" height="28" rx="3" fill="#4a4a4a"/>
<rect x="1380" y="889" width="11" height="9" rx="1" fill="#ddd"/><path d="M1382 889v-3a3.5 3.5 0 0 1 7 0v3" stroke="#ddd" stroke-width="1.6" fill="none"/>
</svg>

<!-- far right sidebar -->
<div class="a" style="left:1530px;top:26px;width:38px;height:931px;background:#2e2e2e;border-left:1px solid #1f1f1f"></div>
<div class="a" style="left:1542px;top:43px;width:14px;height:4px;background:repeating-linear-gradient(90deg,#555 0 1px,transparent 1px 2px)"></div>
<svg style="left:0;top:0" width="1568" height="200">
<rect x="1542" y="70" width="15" height="14" rx="1" fill="#ccc"/><circle cx="1549.5" cy="77" r="3" fill="#2e2e2e"/><rect x="1546" y="86" width="8" height="1.5" fill="#ccc"/>
<circle cx="1549" cy="112" r="7" fill="#ccc"/><circle cx="1552" cy="114" r="3.5" fill="#2e2e2e"/><circle cx="1552" cy="114" r="2" fill="#ccc"/>
<g fill="none" stroke="#ccc" stroke-width="1.4"><circle cx="1550" cy="145" r="6.5"/><path d="M1550 141v4l2 2"/><rect x="1543" y="172" width="13" height="15" rx="1"/><path d="M1546 177h7M1546 180h7M1546 183h7"/></g>
</svg>

<!-- status bar -->
<div class="a" style="left:0;top:957px;width:1568px;height:20px;background:#2b2b2b;border-top:1px solid #1c1c1c"></div>
<div class="a" style="left:3px;top:962px;color:#e8452c;font-size:11.5px">[Scene 3D] OBJ: unexpected illumination model (0-2 recognized)</div>
<div class="a" style="left:1345px;top:962px;color:#d8d8d8;font-size:11.5px;white-space:pre">Cache Disk Usage:   98% | Version: 8.1.3</div>
</div></body></html>
